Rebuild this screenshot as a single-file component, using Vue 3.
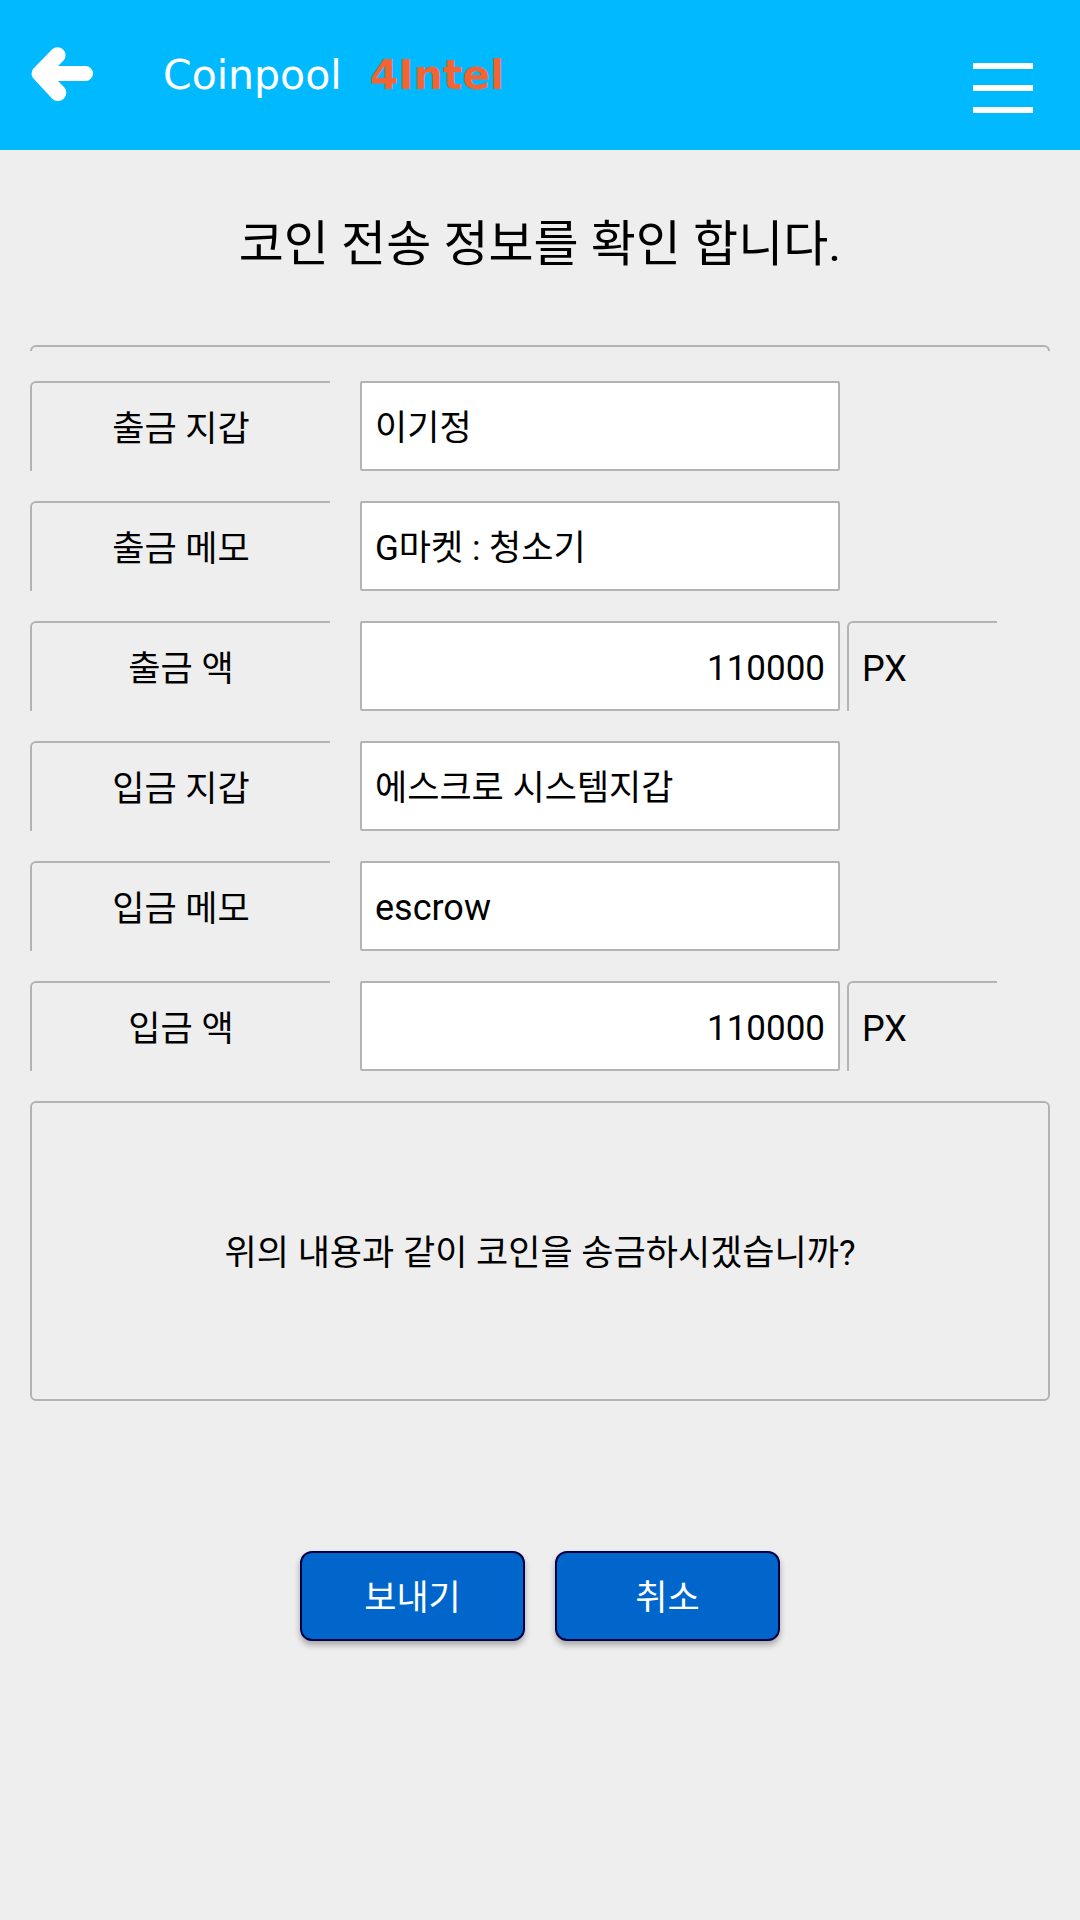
<script setup>
import { reactive } from 'vue'

const rows = reactive([
  { id: 'from-wallet', label: '출금 지갑', value: '이기정' },
  { id: 'from-memo', label: '출금 메모', value: 'G마켓 : 청소기' },
  { id: 'from-amount', label: '출금 액', value: '110000', unit: 'PX' },
  { id: 'to-wallet', label: '입금 지갑', value: '에스크로 시스템지갑' },
  { id: 'to-memo', label: '입금 메모', value: 'escrow', latin: true },
  { id: 'to-amount', label: '입금 액', value: '110000', unit: 'PX' },
])
</script>

<template>
  <div class="page">
    <header class="bar">
      <button class="icon-button" type="button" aria-label="뒤로">
        <svg width="64" height="56" viewBox="0 0 64 56" aria-hidden="true">
          <path
            d="M22 2.5A8 8 0 0 1 34 13L28 19H55.5A7.5 7.5 0 0 1 55.5 34H28L34 40A8 8 0 0 1 22 51.5L3 31Q0 27 3 22Z"
            fill="#fff"
          />
        </svg>
      </button>
      <div class="brand">
        <span>Coinpool</span>
        <span class="brand-sub">4Intel</span>
      </div>
      <button class="icon-button menu" type="button" aria-label="메뉴">
        <svg width="60" height="52" viewBox="0 0 60 52" aria-hidden="true">
          <path d="M0 4H60M0 26H60M0 48H60" stroke="#fff" stroke-width="6" />
        </svg>
      </button>
    </header>

    <main class="content">
      <h1 class="title">코인 전송 정보를 확인 합니다.</h1>
      <div class="cap"></div>

      <form class="form" @submit.prevent>
        <div v-for="row in rows" :key="row.id" class="row">
          <label class="label" :for="row.id">{{ row.label }}</label>
          <input
            :id="row.id"
            v-model="row.value"
            class="field"
            :class="{ amount: row.unit, latin: row.latin }"
            type="text"
          />
          <span v-if="row.unit" class="unit latin">{{ row.unit }}</span>
        </div>

        <p class="question">위의 내용과 같이 코인을 송금하시겠습니까?</p>

        <div class="actions">
          <button class="action" type="submit">보내기</button>
          <button class="action" type="button">취소</button>
        </div>
      </form>
    </main>
  </div>
</template>

<style>
body {
  margin: 0;
  background: #eee;
}
</style>

<style scoped>
.page,
.page * {
  box-sizing: border-box;
}

.page {
  min-height: 100vh;
  background: #eee;
  color: #000;
  font: 35px/44px Roboto, "Noto Sans CJK KR", sans-serif;
}

.bar {
  display: flex;
  align-items: center;
  height: 150px;
  padding: 0 47px 0 30px;
  background: #00b9ff;
}

.icon-button {
  display: flex;
  padding: 0;
  border: 0;
  background: none;
}

.menu {
  margin: 26px 0 0 auto;
}

.brand {
  display: flex;
  gap: 28px;
  margin-left: 69px;
  color: #fff;
  font-family: "DejaVu Sans", sans-serif;
  font-size: 41px;
}

.brand-sub {
  color: #f26532;
  font-weight: 700;
}

.content {
  padding: 63px 30px;
}

.title {
  margin: 0;
  font-size: 49px;
  font-weight: 400;
  line-height: 64px;
  text-align: center;
}

.cap {
  height: 6px;
  margin: 68px 0 30px;
  border: 2px solid #b3b3b3;
  border-bottom: 0;
  border-radius: 6px 6px 0 0;
}

.form {
  display: flex;
  flex-direction: column;
  gap: 30px;
}

.row {
  display: grid;
  grid-template-columns: 10fr 30px 16fr 7px 5fr 53px;
  height: 90px;
}

.label,
.unit {
  display: flex;
  align-items: center;
  padding-top: 6px;
  border: solid #b3b3b3;
  border-width: 2px 0 0 2px;
  border-radius: 6px 0 0 0;
}

.label {
  grid-column: 1;
  justify-content: center;
}

.unit {
  grid-column: 5;
  padding-left: 13px;
}

.field {
  grid-column: 3;
  min-width: 0;
  padding: 6px 13px 0;
  border: 2px solid #b3b3b3;
  border-radius: 2px;
  background: #fff;
  color: inherit;
  font: inherit;
}

.amount {
  text-align: right;
}

.latin {
  padding-top: 4px;
  font-size: 36px;
}

.question {
  display: flex;
  align-items: center;
  justify-content: center;
  min-height: 300px;
  margin: 0;
  padding-top: 6px;
  border: 2px solid #b3b3b3;
  border-radius: 6px;
}

.actions {
  display: flex;
  justify-content: center;
  gap: 30px;
  margin-top: 120px;
}

.action {
  width: 225px;
  height: 90px;
  padding-top: 6px;
  border: 2px solid #004;
  border-radius: 12px;
  background: #06c;
  box-shadow: 0 4px 6px rgba(0, 0, 0, 0.3);
  color: #fff;
  font: inherit;
}
</style>
